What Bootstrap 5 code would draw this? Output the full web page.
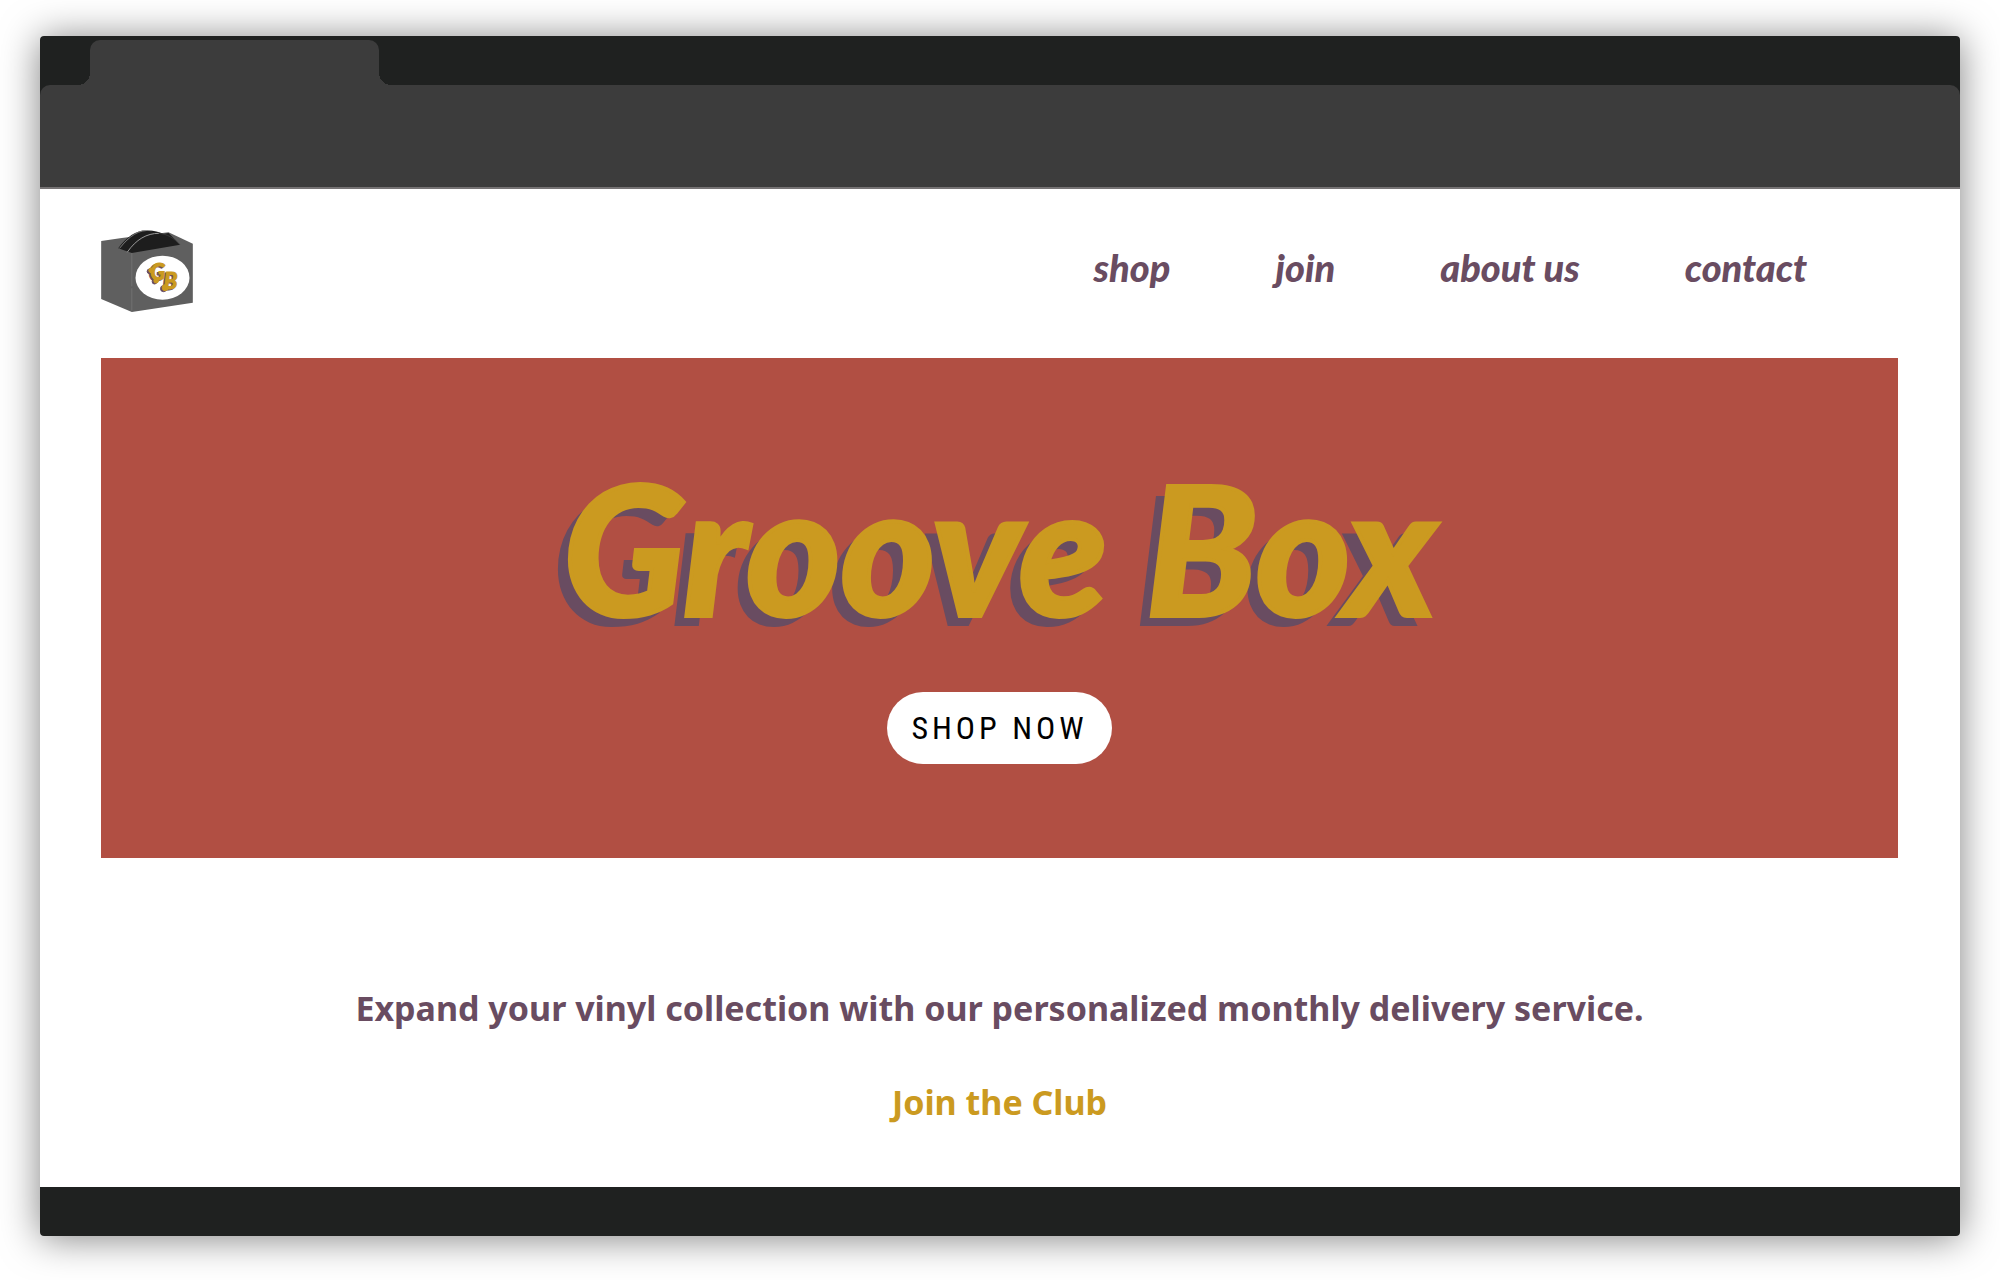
<!DOCTYPE html>
<html lang="en">
<head>
<meta charset="utf-8">
<meta name="viewport" content="width=device-width, initial-scale=1">
<title>Groove Box</title>
<link href="https://cdn.jsdelivr.net/npm/bootstrap@5.3.0/dist/css/bootstrap.min.css" rel="stylesheet">
<style>
  :root { --gb-red: #b14f43; --gb-gold: #cb9a20; --gb-plum: #694c61; --gb-dark: #1f2120; --gb-bar: #3c3c3c; }
  body { background: #fff; padding: 36px 40px 44px; font-family: "Noto Sans", "Open Sans", sans-serif; }
  .browser { min-height: calc(100vh - 80px); border-radius: 3px; box-shadow: 0 2px 38px rgba(0, 0, 0, .5); }
  .browser-top { background: var(--gb-dark); }
  .tab-strip { padding: 4px 50px 0; }
  .browser-tab { position: relative; width: 289px; height: 45px; background: var(--gb-bar); border-radius: 10px 10px 0 0; }
  .browser-tab::before, .browser-tab::after { content: ""; position: absolute; bottom: 0; width: 12px; height: 12px; }
  .browser-tab::before { right: 100%; background: radial-gradient(circle at 0 0, transparent 12px, var(--gb-bar) 12px); }
  .browser-tab::after { left: 100%; background: radial-gradient(circle at 100% 0, transparent 12px, var(--gb-bar) 12px); }
  .browser-tools { height: 104px; background: var(--gb-bar); border-bottom: 2px solid #767374; border-radius: 10px 10px 0 0; }
  .browser-foot { height: 49px; background: var(--gb-dark); }
  .site { padding: 0 62px 0 61px; }
  .site-head { padding: 41px 91px 46px 0; }
  .site-nav { gap: 105px; padding-bottom: 8px; }
  .site-nav a { font: italic 900 38px/44px Lato, sans-serif; color: var(--gb-plum); }
  .hero { min-height: 500px; padding: 98px 0 94px; background: var(--gb-red); }
  .hero h1 { font: italic 900 180px/180px Lato, sans-serif; color: var(--gb-gold); -webkit-text-stroke: 4px var(--gb-gold); text-shadow: -12px 10px 0 var(--gb-plum); }
  .shop-btn { width: 225px; height: 72px; background: #fff; color: #000; font: 32px/40px "Liberation Sans Narrow", "Roboto Condensed", Roboto, sans-serif; letter-spacing: 4px; }
  .pitch { padding-top: 127px; font-size: 34px; line-height: 46px; font-weight: 700; color: var(--gb-plum); }
  .pitch a { color: var(--gb-gold); }
</style>
</head>
<body>
<div class="browser d-flex flex-column overflow-visible bg-white">
  <div class="browser-top rounded-top-1">
    <div class="tab-strip"><div class="browser-tab"></div></div>
    <div class="browser-tools"></div>
  </div>
  <div class="site flex-grow-1">
    <header class="site-head d-flex align-items-center justify-content-between">
      <a href="#" class="d-block lh-1" aria-label="Groove Box home">
        <svg width="92" height="82" viewBox="63 60 275 246" class="d-block">
          <path d="M63 93 125 84 265 67 338 101V278L155 306 63 267Z" fill="#5f5f5f"/>
          <path d="M114 115C140 79 172 58 205 61 222 63 236 66 250 72L265 69 300 104 155 129Z" fill="#1d1d1d"/>
          <path d="M118 115C148 78 176 57 215 62" fill="none" stroke="#aaa" stroke-width="2"/>
          <path d="M141 127C168 88 200 70 236 70" fill="none" stroke="#999" stroke-width="3"/>
          <path d="M236 70C262 72 281 84 300 105" fill="none" stroke="#444" stroke-width="2"/>
          <path d="M155 129V302" fill="none" stroke="#999" stroke-width="1" stroke-dasharray="100 6 70"/>
          <ellipse cx="247" cy="203" rx="81" ry="66" fill="#fff"/>
          <g font-family="Lato, sans-serif" font-style="italic" font-weight="900" font-size="66" stroke-width="3">
            <g fill="#694c61" stroke="#694c61"><text x="205" y="214">G</text><text x="246" y="241">B</text><circle cx="208" cy="184" r="7"/><circle cx="223" cy="215" r="7"/><circle cx="250" cy="236" r="9"/></g>
            <g fill="#cb9a20" stroke="#cb9a20"><text x="210" y="211">G</text><text x="251" y="238">B</text><circle cx="213" cy="181" r="7"/><circle cx="228" cy="212" r="7"/><circle cx="255" cy="233" r="9"/></g>
          </g>
        </svg>
      </a>
      <nav class="site-nav d-flex">
        <a href="#" class="text-decoration-none">shop</a>
        <a href="#" class="text-decoration-none">join</a>
        <a href="#" class="text-decoration-none">about us</a>
        <a href="#" class="text-decoration-none">contact</a>
      </nav>
    </header>
    <section class="hero d-flex flex-column align-items-center justify-content-between">
      <h1 class="m-0 text-nowrap">Groove Box</h1>
      <button type="button" class="btn shop-btn rounded-pill p-0 border-0">SHOP NOW</button>
    </section>
    <section class="pitch text-center">
      <p class="mb-0">Expand your vinyl collection with our personalized monthly delivery service.</p>
      <p class="mt-5 mb-0"><a href="#" class="text-decoration-none">Join the Club</a></p>
    </section>
  </div>
  <div class="browser-foot rounded-bottom-1"></div>
</div>
<script src="https://cdn.jsdelivr.net/npm/bootstrap@5.3.0/dist/js/bootstrap.bundle.min.js"></script>
</body>
</html>
